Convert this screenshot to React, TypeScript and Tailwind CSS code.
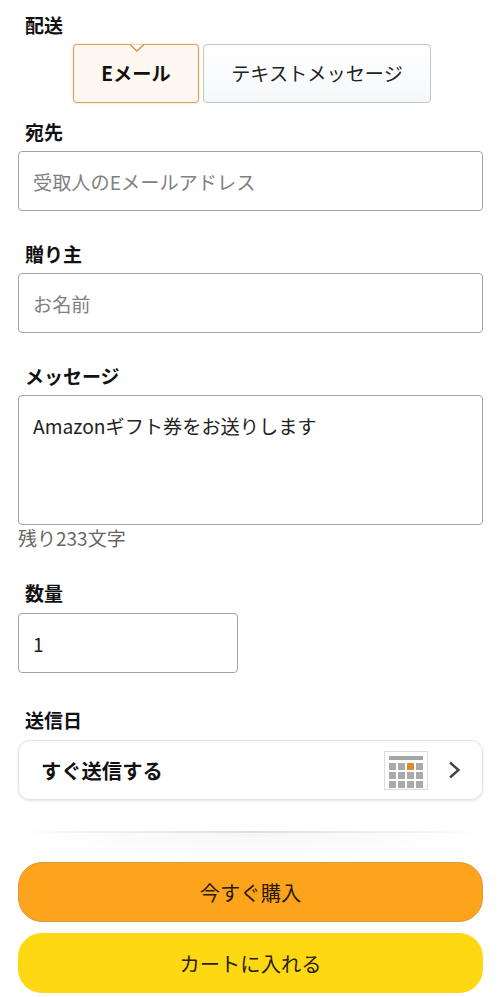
const font = "font-['Noto_Sans_CJK_JP','Noto_Sans',sans-serif]";

function Label({ children, className = "" }: { children: React.ReactNode; className?: string }) {
  return (
    <div className={`h-[26px] pl-[7px] text-[19px] font-bold leading-[26px] text-[#111] ${className}`}>{children}</div>
  );
}

function Field({ text, muted = false, className = "" }: { text: string; muted?: boolean; className?: string }) {
  return (
    <div
      className={`flex h-[60px] items-center rounded-[4px] border border-[#a3a3a3] bg-white pl-[14px] pt-[3px] text-[19.2px] ${
        muted ? "text-[#808080]" : "text-[#222]"
      } ${className}`}
    >
      {text}
    </div>
  );
}

function CalendarIcon() {
  const cells = Array.from({ length: 12 }, (_, i) => i);
  return (
    <div className="flex h-[39px] w-[44px] flex-col gap-[2px] border border-[#ddd] bg-white px-[4px] pt-[4px]">
      <div className="h-[4px] bg-[#a5a5a5]" />
      <div className="mt-[1px] grid grid-cols-4 gap-[2px]">
        {cells.map((i) => (
          <div key={i} className={`h-[7px] ${i === 2 ? "bg-[#dd8a2c]" : "bg-[#aaaaaa]"}`} />
        ))}
      </div>
    </div>
  );
}

export default function App() {
  return (
    <div className={`h-[997px] w-[500px] overflow-hidden bg-white pl-[18px] pr-[17px] pt-[12px] ${font}`}>
      <Label>配送</Label>
      <div className="mt-[6px] flex h-[59px] gap-[4px] pl-[55px]">
        <div className="relative flex w-[126px] items-center justify-center rounded-[4px] border border-[#d9a35a] bg-[#fef8f0] text-[19.2px] font-bold text-[#111] shadow-[0_0_2px_rgba(228,160,70,0.6)]">
          Eメール
          <svg className="absolute left-[56px] top-[-1px]" width="14" height="8" viewBox="0 0 14 8">
            <path d="M0 0.5 L7 7 L14 0.5" fill="#fff" stroke="#c99550" strokeWidth="1.4" />
          </svg>
        </div>
        <div className="flex w-[228px] items-center justify-center rounded-[4px] border border-[#bfc5c9] bg-gradient-to-b from-white to-[#f5f8fa] text-[19.2px] text-[#222]">
          テキストメッセージ
        </div>
      </div>
      <Label className="mt-[16px]">宛先</Label>
      <Field text="受取人のEメールアドレス" muted className="mt-[6px]" />
      <Label className="mt-[30px]">贈り主</Label>
      <Field text="お名前" muted className="mt-[6px]" />
      <Label className="mt-[30px]">メッセージ</Label>
      <div className="mt-[6px] h-[130px] rounded-[4px] border border-[#a3a3a3] bg-white pl-[14px] pt-[15px] text-[19.2px] leading-[30px] text-[#222]">
        Amazonギフト券をお送りします
      </div>
      <div className="h-[26px] text-[19px] leading-[26px] text-[#666]">残り233文字</div>
      <Label className="mt-[29px]">数量</Label>
      <Field text="1" className="mt-[7px] w-[220px]" />
      <Label className="mt-[34px]">送信日</Label>
      <div className="mt-[7px] flex h-[60px] items-center rounded-[12px] border border-[#e4e4e4] bg-white pl-[22px] pr-[21px] shadow-[0_1px_3px_rgba(0,0,0,0.1)]">
        <div className="flex-1 text-[20.3px] font-bold text-[#111]">すぐ送信する</div>
        <CalendarIcon />
        <svg className="ml-[20px]" width="13" height="18" viewBox="0 0 13 18" fill="none">
          <path d="M2 1.5 L10.5 9 L2 16.5" stroke="#444" strokeWidth="2.4" />
        </svg>
      </div>
      <div className="mt-[31px] h-[31px] bg-[radial-gradient(ellipse_50%_100%_at_50%_0%,#f6f6f6,#ffffff)]">
        <div className="h-[2px] bg-[linear-gradient(to_right,#ffffff,#f2f2f2_15%,#dedede_50%,#f2f2f2_85%,#ffffff)]" />
      </div>
      <div className="flex h-[60px] items-center justify-center rounded-[24px] border border-[#d99a3a] bg-[#fea41c] text-[20.3px] text-[#2a1a05]">
        今すぐ購入
      </div>
      <div className="mt-[11px] flex h-[60px] items-center justify-center rounded-[24px] bg-[#fed813] text-[20.3px] text-[#2a2205]">
        カートに入れる
      </div>
    </div>
  );
}
